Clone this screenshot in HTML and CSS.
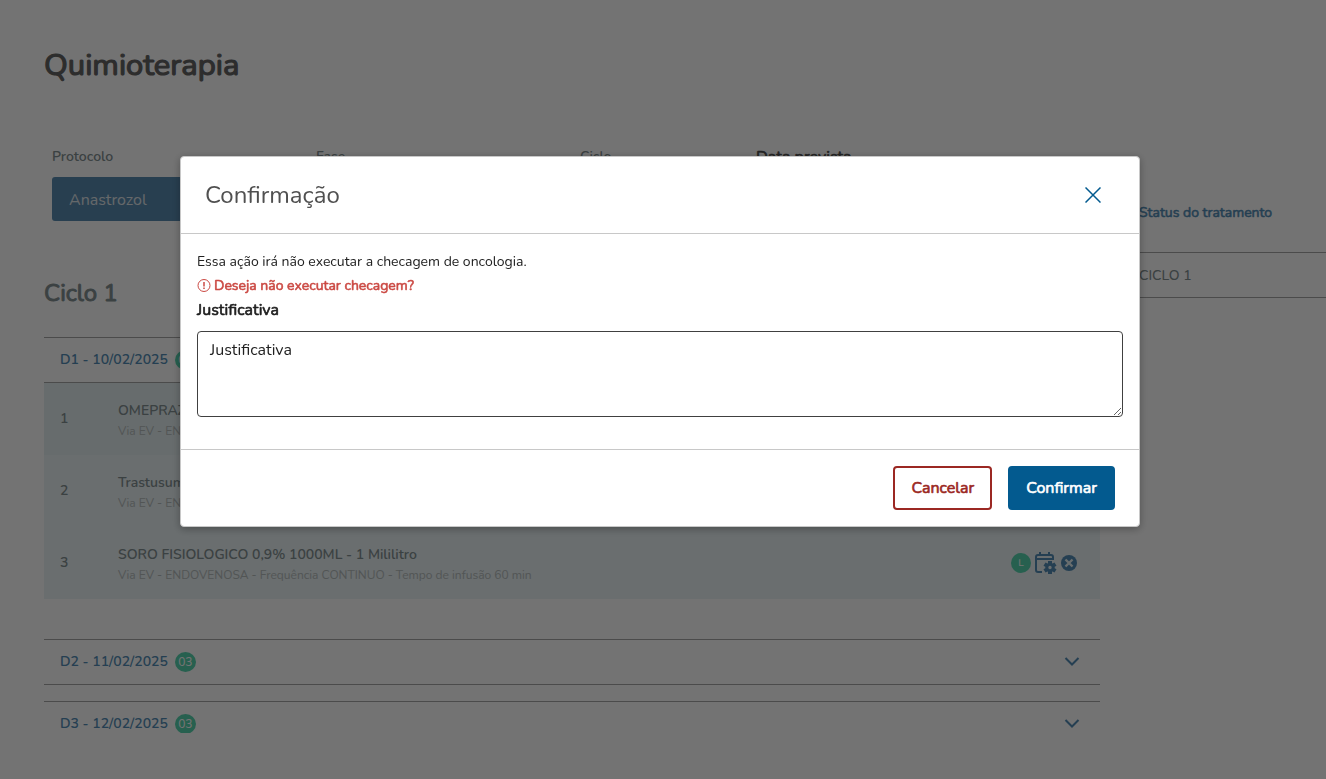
FILE: index.html
```
<!DOCTYPE html>
<html lang="pt-BR">
<head>
	<meta charset="UTF-8">
	<meta name="viewport" content="width=device-width, initial-scale=1">
	<title>Quimioterapia</title>
	<link rel="stylesheet" href="styles.css">
</head>
<body>
	<div class="page">
		<main class="content">
			<h1>Quimioterapia</h1>
			<div class="filters">
				<div class="filter">
					<span class="filter-label">Protocolo</span>
					<button type="button" class="protocol">Anastrozol</button>
				</div>
				<div class="filter"><span class="filter-label">Fase</span></div>
				<div class="filter"><span class="filter-label">Ciclo</span></div>
				<div class="filter"><span class="filter-label strong">Data prevista</span></div>
			</div>

			<h2>Ciclo 1</h2>
			<section class="day">
				<div class="day-head"><a href="#">D1 - 10/02/2025</a><span class="badge">03</span></div>
				<div class="item">
					<span class="number">1</span>
					<div class="drug"><strong>OMEPRAZOL</strong><small>Via EV - ENDOVENOSA</small></div>
				</div>
				<div class="item">
					<span class="number">2</span>
					<div class="drug"><strong>Trastusumabe</strong><small>Via EV - ENDOVENOSA</small></div>
				</div>
				<div class="item">
					<span class="number">3</span>
					<div class="drug"><strong>SORO FISIOLOGICO 0,9% 1000ML - 1 Mililitro</strong><small>Via EV - ENDOVENOSA - Frequência CONTINUO - Tempo de infusão 60 min</small></div>
					<div class="actions">
						<span class="status">L</span>
						<svg class="calendar" width="22" height="22" viewBox="0 0 22 22">
							<path d="M7 20H3a2 2 0 0 1-2-2V5a2 2 0 0 1 2-2h13a2 2 0 0 1 2 2v3M1 7h17M5 0v4M14 0v4" fill="none" stroke="currentColor" stroke-width="2"/>
							<path d="M13 9h4v2.200l.6.400L19.500 10.500l2 3.200-1.800 1.100v1.400l1.800 1.100-2 3.200-1.900-1.100-.6.400V22h-4v-2.200l-.6-.4-1.900 1.100-2-3.200 1.800-1.100v-1.400l-1.800-1.100 2-3.200 1.900 1.100.6-.4zM15 13.800a1.700 1.700 0 1 0 0 3.400a1.700 1.700 0 0 0 0-3.400z" fill="currentColor" fill-rule="evenodd"/>
						</svg>
						<svg class="remove" width="16" height="16" viewBox="0 0 16 16">
							<circle cx="8" cy="8" r="8" fill="currentColor"/>
							<path d="M4.500 4.500l7 7M11.500 4.500l-7 7" stroke="#e9f4f5" stroke-width="2.400"/>
						</svg>
					</div>
				</div>
			</section>
			<section class="day">
				<div class="day-head">
					<a href="#">D2 - 11/02/2025</a><span class="badge">03</span>
					<svg class="chevron" width="16" height="10" viewBox="0 0 16 10"><path d="M1.500 1L8 7.500l6.500-6.500" fill="none" stroke="currentColor" stroke-width="2"/></svg>
				</div>
			</section>
			<section class="day">
				<div class="day-head">
					<a href="#">D3 - 12/02/2025</a><span class="badge">03</span>
					<svg class="chevron" width="16" height="10" viewBox="0 0 16 10"><path d="M1.500 1L8 7.500l6.500-6.500" fill="none" stroke="currentColor" stroke-width="2"/></svg>
				</div>
			</section>
		</main>
		<aside class="treatment">
			<h3>Status do tratamento</h3>
			<div class="cycle">CICLO 1</div>
		</aside>
	</div>

	<div class="overlay">
		<div class="modal" role="dialog" aria-modal="true" aria-labelledby="modal-title">
			<div class="modal-header">
				<h2 id="modal-title">Confirmação</h2>
				<button type="button" class="close" aria-label="Fechar">
					<svg width="16" height="16" viewBox="0 0 16 16"><path d="M.5.5l15 15M15.500.5l-15 15" stroke="currentColor" stroke-width="1.500"/></svg>
				</button>
			</div>
			<div class="modal-body">
				<p>Essa ação irá não executar a checagem de oncologia.</p>
				<p class="warning">
					<svg width="14" height="14" viewBox="0 0 14 14" fill="none" stroke="currentColor"><circle cx="7" cy="6.500" r="6"/><path d="M7 3v4.500M7 8.500v1.500" stroke-width="1.500"/></svg>
					Deseja não executar checagem?
				</p>
				<label for="reason">Justificativa</label>
				<textarea id="reason" placeholder="Justificativa"></textarea>
			</div>
			<div class="modal-footer">
				<button type="button" class="btn cancel">Cancelar</button>
				<button type="button" class="btn confirm">Confirmar</button>
			</div>
		</div>
	</div>
</body>
</html>
```
FILE: styles.css
```
*{
	box-sizing: border-box;
}
body{
	margin: 0;
	font-family: Nunito, Lato, sans-serif;
	font-size: 14px;
	line-height: 24px;
	color: #839092;
	background-color: #fefefe;
}
h1, h2, h3, p{
	margin: 0;
}
button, textarea{
	font-family: inherit;
}
/* bold look on the regular weight */
h1, .content h2, .filter-label.strong, .treatment h3, .warning, .modal-body label, .btn{
	font-weight: normal;
	-webkit-text-stroke: .04em currentColor;
}
.page{
	display: flex;
	height: calc(100vh - 46px);
	padding-left: 44px;
	overflow: hidden;
}
.content{
	flex: 1;
}
h1{
	margin-top: 45px;
	font-size: 31px;
	line-height: 40px;
	color: #646464;
}
.filters{
	display: grid;
	grid-template-columns: 3fr 3fr 2fr 4fr;
	margin-top: 60px;
}
.filter{
	padding: 0 8px;
}
.filter-label{
	display: block;
	font-weight: 650;
}
.filter-label.strong{
	font-size: 16px;
	color: #505050;
}
.protocol{
	display: block;
	width: 100%;
	height: 44px;
	margin-top: 8px;
	padding: 1px 17px 0;
	border: none;
	border-radius: 3px;
	background-color: #598cb2;
	color: #e0e6ea;
	font-size: 16px;
	text-align: left;
}
.content h2{
	margin: 56px 0 28px;
	font-size: 24px;
	line-height: 32px;
}
.day{
	margin-bottom: 16px;
}
.day:first-of-type{
	margin-bottom: 40px;
}
.day-head{
	display: flex;
	align-items: center;
	gap: 7px;
	height: 46px;
	padding: 0 20px 0 16px;
	border-top: 1px solid #a7a7a7;
	border-bottom: 1px solid #a7a7a7;
}
.day-head a{
	color: #538db6;
	font-weight: 650;
	text-decoration: none;
}
.badge, .status{
	width: 21px;
	height: 20px;
	border-radius: 50%;
	background-color: #57d5b0;
	color: white;
	font-size: 12px;
	font-weight: 500;
	line-height: 20px;
	text-align: center;
}
.chevron{
	margin-left: auto;
	color: #538db6;
}
.item{
	display: flex;
	align-items: center;
	height: 72px;
	padding: 0 23px 0 16px;
	background-color: #eaf3f5;
}
.day-head + .item{
	background-color: #e5f0f2;
}
.number{
	width: 58px;
	font-weight: 650;
}
.drug{
	flex: 1;
	padding-top: 4px;
}
.drug strong, .drug small{
	display: block;
	font-weight: 650;
	line-height: 20px;
}
.drug small{
	font-size: 12px;
	font-weight: normal;
	line-height: 21px;
	color: #b6bdbd;
}
.actions{
	display: flex;
	align-items: center;
	gap: 4px;
	color: #538db6;
}
.status{
	width: 20px;
	font-size: 10px;
}
.treatment{
	width: 226px;
	margin-top: 201px;
	padding-left: 24px;
}
.treatment h3{
	padding: 0 15px 27px;
	border-bottom: 1px solid #a7a7a7;
	color: #538db6;
	font-size: 14px;
}
.cycle{
	padding: 11px 15px 9px;
	border-bottom: 1px solid #a7a7a7;
	font-weight: 500;
}
.overlay{
	position: fixed;
	inset: 0;
	padding: 156px 6px 0 0;
	background-color: rgba(0, 0, 0, .55);
}
.modal{
	max-width: 960px;
	margin: 0 auto;
	border: 1px solid #c8c8c8;
	border-radius: 4px;
	background-color: white;
	box-shadow: 0 2px 8px rgba(0, 0, 0, .3);
	color: #212121;
}
.modal-header{
	display: flex;
	align-items: center;
	justify-content: space-between;
	height: 77px;
	padding: 0 36px 0 24px;
	border-bottom: 1px solid #c8c8c8;
}
.modal-header h2{
	color: #505050;
	font-size: 24px;
	font-weight: normal;
}
.close{
	display: flex;
	padding: 2px;
	border: none;
	background: none;
	color: #035a8f;
}
.modal-body{
	padding: 16px 16px 32px;
}
.warning{
	display: flex;
	align-items: center;
	gap: 3px;
	color: #cb4a44;
}
.modal-body label{
	display: block;
	font-size: 16px;
}
textarea{
	display: block;
	width: 100%;
	height: 86px;
	margin-top: 9px;
	padding: 6px 12px;
	border: 1px solid #404040;
	border-radius: 4px;
	font-size: 16px;
	line-height: 24px;
}
textarea::placeholder{
	color: #212121;
}
.modal-footer{
	display: flex;
	justify-content: flex-end;
	gap: 16px;
	padding: 16px 24px;
	border-top: 1px solid #c8c8c8;
}
.btn{
	height: 44px;
	padding: 0 16px;
	border: 2px solid #9b2823;
	border-radius: 4px;
	background-color: white;
	color: #9b2823;
	font-size: 16px;
}
.confirm{
	border-color: #035a8f;
	background-color: #035a8f;
	color: white;
}
```
